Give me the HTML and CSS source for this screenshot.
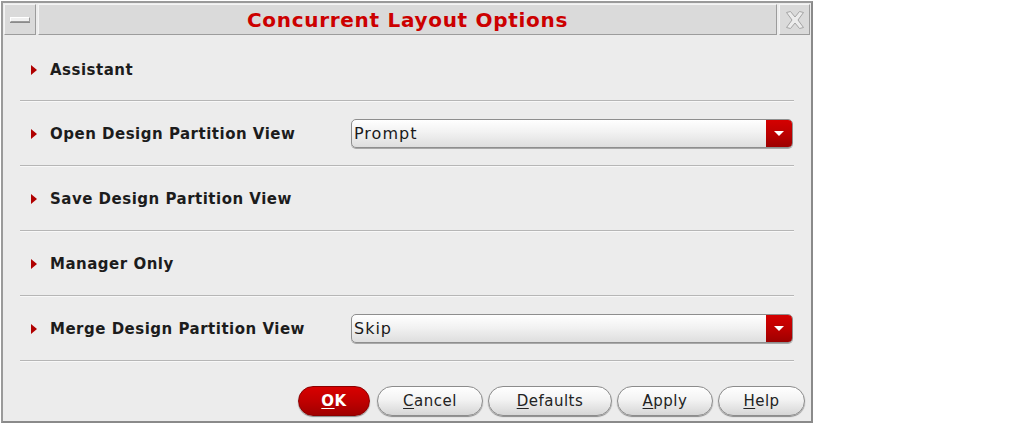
FILE: index.html
```html
<!DOCTYPE html>
<html>
<head>
<meta charset="utf-8">
<link rel="stylesheet" href="styles.css">
</head>
<body>
<div class="dialog">
  <div class="titlebar">
    <div class="tb-box tb-min"><span class="min-bar"></span></div>
    <div class="tb-box tb-title">Concurrent Layout Options</div>
    <div class="tb-box tb-close">
      <svg width="22" height="22" viewBox="0 0 22 22">
        <path d="M2.5 3.5 L6.5 2.5 L11 8 L15.5 2.5 L19.5 3.5 L14 11 L19.5 18.5 L15.5 19.5 L11 14 L6.5 19.5 L2.5 18.5 L8 11 Z" fill="#ececec" stroke="#a4a4a4" stroke-width="1" stroke-linejoin="round"/>
      </svg>
    </div>
  </div>
  <div class="content">
    <div class="row">
      <div class="label-area"><span class="tri"></span><span class="label">Assistant</span></div>
    </div>
    <div class="sep"></div>
    <div class="row">
      <div class="label-area"><span class="tri"></span><span class="label">Open Design Partition View</span></div>
      <div class="combo"><span class="combo-text">Prompt</span><span class="combo-arrow"><span class="down"></span></span></div>
    </div>
    <div class="sep"></div>
    <div class="row">
      <div class="label-area"><span class="tri"></span><span class="label">Save Design Partition View</span></div>
    </div>
    <div class="sep"></div>
    <div class="row">
      <div class="label-area"><span class="tri"></span><span class="label">Manager Only</span></div>
    </div>
    <div class="sep"></div>
    <div class="row">
      <div class="label-area"><span class="tri"></span><span class="label">Merge Design Partition View</span></div>
      <div class="combo"><span class="combo-text">Skip</span><span class="combo-arrow"><span class="down"></span></span></div>
    </div>
    <div class="sep"></div>
  </div>
  <div class="buttons">
    <div class="btn btn-ok"><u>O</u>K</div>
    <div class="btn btn-cancel"><u>C</u>ancel</div>
    <div class="btn btn-defaults"><u>D</u>efaults</div>
    <div class="btn btn-apply"><u>A</u>pply</div>
    <div class="btn btn-help"><u>H</u>elp</div>
  </div>
</div>
</body>
</html>
```
FILE: styles.css
```css
* { box-sizing: border-box; }
html, body {
  margin: 0;
  padding: 0;
  background: #ffffff;
}
body {
  font-family: "DejaVu Sans", "Liberation Sans", sans-serif;
  width: 1013px;
  height: 428px;
  overflow: hidden;
}
.dialog {
  margin: 1px 0 0 1px;
  width: 812px;
  height: 422px;
  border: 2px solid #9a9a9a;
  border-right-color: #8a8a8a;
  border-bottom-color: #8a8a8a;
  background: #ececec;
  display: flex;
  flex-direction: column;
}
.titlebar {
  display: flex;
  height: 33px;
  padding: 1px 1px 0 1px;
  gap: 2px;
  background: #ececec;
}
.tb-box {
  background: #dadada;
  border-top: 1px solid #f4f4f4;
  border-left: 1px solid #f4f4f4;
  border-right: 1px solid #9c9c9c;
  border-bottom: 1px solid #9c9c9c;
  height: 31px;
}
.tb-min {
  width: 32px;
  display: flex;
  align-items: center;
  justify-content: center;
}
.min-bar {
  display: block;
  width: 20px;
  height: 5px;
  background: #f0f0f0;
  border: 1px solid #9a9a9a;
  border-top-color: #ffffff;
  border-left-color: #ffffff;
  box-shadow: 0 1px 0 #8a8a8a;
}
.tb-title {
  flex: 1;
  display: flex;
  align-items: center;
  justify-content: center;
  color: #cc0000;
  font-weight: bold;
  font-size: 20px;
  letter-spacing: 0.7px;
}
.tb-close {
  width: 31px;
  display: flex;
  align-items: center;
  justify-content: center;
}
.content {
  display: flex;
  flex-direction: column;
  padding-top: 1px;
}
.row {
  height: 63px;
  display: flex;
  align-items: center;
  padding-left: 28px;
  padding-right: 17px;
}
.row:first-child {
  padding-top: 2px;
}
.label-area {
  width: 320px;
  display: flex;
  align-items: center;
}
.tri {
  width: 0;
  height: 0;
  border-top: 5px solid transparent;
  border-bottom: 5px solid transparent;
  border-left: 6px solid #b00000;
  margin-right: 13px;
}
.label {
  font-weight: bold;
  font-size: 15px;
  letter-spacing: 0.5px;
  color: #1c1c1c;
}
.sep {
  height: 2px;
  margin: 0 17px 0 17px;
  border-top: 1px solid #b6b6b6;
  border-bottom: 1px solid #f8f8f8;
}
.combo {
  width: 442px;
  height: 29px;
  display: flex;
  align-items: stretch;
  border: 1px solid #8e8e8e;
  border-radius: 5px;
  background: linear-gradient(#ffffff, #f2f2f2 45%, #dedede);
  box-shadow: 0 1px 0 #a8a8a8;
  overflow: hidden;
}
.combo-text {
  flex: 1;
  display: flex;
  align-items: center;
  padding-left: 2px;
  font-size: 16px;
  letter-spacing: 1px;
  color: #1a1a1a;
}
.combo-arrow {
  width: 26px;
  background: linear-gradient(#d40000, #b80000 60%, #9c0000);
  display: flex;
  align-items: center;
  justify-content: center;
}
.down {
  width: 0;
  height: 0;
  border-left: 5px solid transparent;
  border-right: 5px solid transparent;
  border-top: 5px solid #ffffff;
}
.buttons {
  flex: 1;
  display: flex;
  justify-content: flex-end;
  align-items: flex-end;
  gap: 5px;
  padding: 0 6px 5px 0;
}
.btn {
  height: 30px;
  border-radius: 15px;
  border: 1px solid #8c8c8c;
  background: linear-gradient(#ffffff, #f3f3f3 45%, #d6d6d6);
  box-shadow: 0 1px 1px #8a8a8a;
  display: flex;
  align-items: center;
  justify-content: center;
  font-size: 15px;
  letter-spacing: 0.5px;
  color: #222222;
}
.btn u {
  text-decoration-thickness: 1px;
  text-underline-offset: 2px;
}
.btn-ok {
  width: 72px;
  margin-right: 2px;
  background: linear-gradient(#d80000, #c00000 50%, #a00000);
  border-color: #8c0000;
  color: #ffffff;
  font-weight: bold;
}
.btn-cancel { width: 106px; }
.btn-defaults { width: 124px; }
.btn-apply { width: 96px; }
.btn-help { width: 87px; }
```
